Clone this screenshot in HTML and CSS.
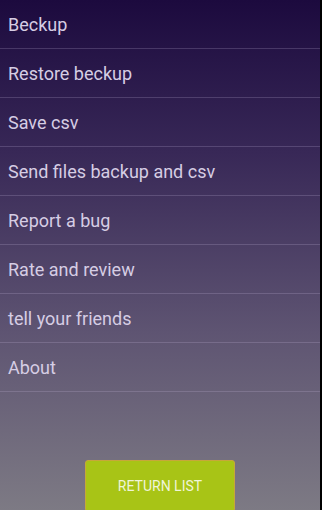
FILE: index.html
```html
<!DOCTYPE html>
<html lang="en">
<head>
    <meta charset="UTF-8">
    <meta name="viewport" content="width=device-width, initial-scale=1.0">
    <title>Menu</title>
    <link rel="stylesheet" href="styles.css">
</head>
<body>
    <div class="screen">
        <ul class="menu">
            <li>Beckup</li>
            <li>Restore beckup</li>
            <li>Save csv</li>
            <li>Send files backup and csv</li>
            <li>Report a bug</li>
            <li>Rate and review</li>
            <li>tell your friends</li>
            <li>About</li>
        </ul>
        <div class="footer">
            <button class="btn">RETURN LIST</button>
        </div>
    </div>
</body>
</html>
```

FILE: styles.css
```css
html, body {
    margin: 0;
    padding: 0;
    height: 100%;
}

body {
    font-family: Roboto, "Noto Sans", sans-serif;
    background: #000;
    overflow: hidden;
}

.screen {
    width: 320px;
    height: 510px;
    display: flex;
    flex-direction: column;
    background: linear-gradient(to bottom, #1c0a3e 0%, #382857 30%, #5e5472 65%, #7d7a84 100%);
}

.menu {
    list-style: none;
    margin: 0;
    padding: 0;
}

.menu li {
    height: 48px;
    line-height: 50px;
    padding-left: 8px;
    font-size: 18px;
    color: #d6cde4;
    border-bottom: 1px solid rgba(200, 185, 225, 0.22);
}

.footer {
    flex: 1;
    display: flex;
    justify-content: center;
    align-items: flex-end;
}

.btn {
    width: 150px;
    height: 52px;
    margin-bottom: -2px;
    border: 1px solid #c7a73a;
    border-radius: 3px;
    background: #a8c416;
    color: #f0f4d8;
    font-family: Roboto, sans-serif;
    font-size: 14px;
    padding: 0;
}
```
